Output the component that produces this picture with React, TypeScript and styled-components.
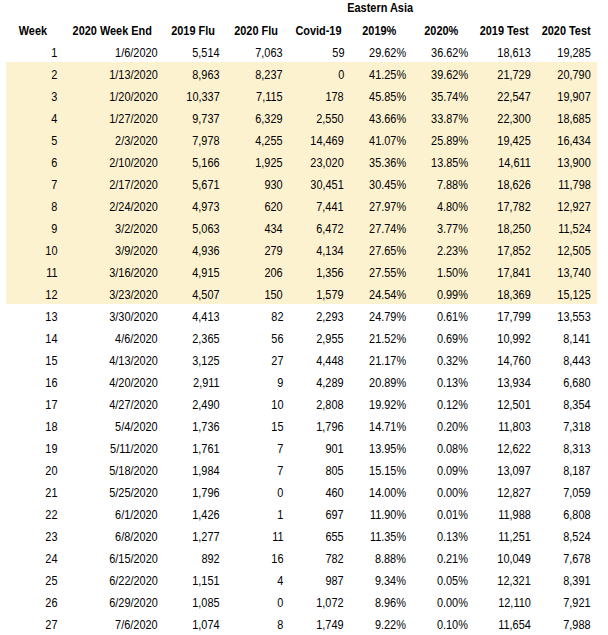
import React from "react";
import styled, { createGlobalStyle } from "styled-components";

const Global = createGlobalStyle`
  html, body { margin: 0; padding: 0; background: #ffffff; }
  body { font-family: "Liberation Sans", Arial, sans-serif; color: #000; }
`;

const Page = styled.div`
  padding: 0 0 0 6px;
`;

const Table = styled.table`
  border-collapse: collapse;
  table-layout: fixed;
  width: 591px;
  font-size: 13px;
`;

const Col = styled.col<{ $w: number }>`
  width: ${(p) => p.$w}px;
`;

const TitleCell = styled.th`
  height: 18px;
  padding: 0 3px 3px 0;
  font-weight: bold;
  text-align: center;
  vertical-align: bottom;
  line-height: 14px;
  box-sizing: border-box;
  white-space: nowrap;
`;

const HeadCell = styled.th`
  height: 22px;
  padding: 0 3px 2px 0;
  font-weight: bold;
  text-align: center;
  vertical-align: bottom;
  line-height: 14px;
  box-sizing: border-box;
  white-space: nowrap;
`;

const Row = styled.tr<{ $hl: boolean }>`
  background: ${(p) => (p.$hl ? "#fdf2cf" : "transparent")};
`;

const Cell = styled.td`
  height: 22px;
  padding: 0 6px 2px 0;
  text-align: right;
  vertical-align: bottom;
  line-height: 14px;
  box-sizing: border-box;
  white-space: nowrap;
`;

/* the sheet's font is rendered horizontally condensed */
const Narrow = styled.span<{ $origin: "right" | "center" }>`
  display: inline-block;
  transform: scaleX(0.84);
  transform-origin: ${(p) => p.$origin} bottom;
`;

const widths = [57, 101, 62, 63, 61, 62, 62, 63, 60];
const headers = [
  "Week",
  "2020 Week End",
  "2019 Flu",
  "2020 Flu",
  "Covid-19",
  "2019%",
  "2020%",
  "2019 Test",
  "2020 Test",
];

const data: string[][] = [
  ["1", "1/6/2020", "5,514", "7,063", "59", "29.62%", "36.62%", "18,613", "19,285"],
  ["2", "1/13/2020", "8,963", "8,237", "0", "41.25%", "39.62%", "21,729", "20,790"],
  ["3", "1/20/2020", "10,337", "7,115", "178", "45.85%", "35.74%", "22,547", "19,907"],
  ["4", "1/27/2020", "9,737", "6,329", "2,550", "43.66%", "33.87%", "22,300", "18,685"],
  ["5", "2/3/2020", "7,978", "4,255", "14,469", "41.07%", "25.89%", "19,425", "16,434"],
  ["6", "2/10/2020", "5,166", "1,925", "23,020", "35.36%", "13.85%", "14,611", "13,900"],
  ["7", "2/17/2020", "5,671", "930", "30,451", "30.45%", "7.88%", "18,626", "11,798"],
  ["8", "2/24/2020", "4,973", "620", "7,441", "27.97%", "4.80%", "17,782", "12,927"],
  ["9", "3/2/2020", "5,063", "434", "6,472", "27.74%", "3.77%", "18,250", "11,524"],
  ["10", "3/9/2020", "4,936", "279", "4,134", "27.65%", "2.23%", "17,852", "12,505"],
  ["11", "3/16/2020", "4,915", "206", "1,356", "27.55%", "1.50%", "17,841", "13,740"],
  ["12", "3/23/2020", "4,507", "150", "1,579", "24.54%", "0.99%", "18,369", "15,125"],
  ["13", "3/30/2020", "4,413", "82", "2,293", "24.79%", "0.61%", "17,799", "13,553"],
  ["14", "4/6/2020", "2,365", "56", "2,955", "21.52%", "0.69%", "10,992", "8,141"],
  ["15", "4/13/2020", "3,125", "27", "4,448", "21.17%", "0.32%", "14,760", "8,443"],
  ["16", "4/20/2020", "2,911", "9", "4,289", "20.89%", "0.13%", "13,934", "6,680"],
  ["17", "4/27/2020", "2,490", "10", "2,808", "19.92%", "0.12%", "12,501", "8,354"],
  ["18", "5/4/2020", "1,736", "15", "1,796", "14.71%", "0.20%", "11,803", "7,318"],
  ["19", "5/11/2020", "1,761", "7", "901", "13.95%", "0.08%", "12,622", "8,313"],
  ["20", "5/18/2020", "1,984", "7", "805", "15.15%", "0.09%", "13,097", "8,187"],
  ["21", "5/25/2020", "1,796", "0", "460", "14.00%", "0.00%", "12,827", "7,059"],
  ["22", "6/1/2020", "1,426", "1", "697", "11.90%", "0.01%", "11,988", "6,808"],
  ["23", "6/8/2020", "1,277", "11", "655", "11.35%", "0.13%", "11,251", "8,524"],
  ["24", "6/15/2020", "892", "16", "782", "8.88%", "0.21%", "10,049", "7,678"],
  ["25", "6/22/2020", "1,151", "4", "987", "9.34%", "0.05%", "12,321", "8,391"],
  ["26", "6/29/2020", "1,085", "0", "1,072", "8.96%", "0.00%", "12,110", "7,921"],
  ["27", "7/6/2020", "1,074", "8", "1,749", "9.22%", "0.10%", "11,654", "7,988"],
];

export default function App() {
  return (
    <>
      <Global />
      <Page>
        <Table>
          <colgroup>
            {widths.map((w, i) => (
              <Col key={i} $w={w} />
            ))}
          </colgroup>
          <thead>
            <tr>
              <TitleCell colSpan={4} />
              <TitleCell colSpan={3}>
                <Narrow $origin="center">Eastern Asia</Narrow>
              </TitleCell>
              <TitleCell colSpan={2} />
            </tr>
            <tr>
              {headers.map((h) => (
                <HeadCell key={h}>
                  <Narrow $origin="center">{h}</Narrow>
                </HeadCell>
              ))}
            </tr>
          </thead>
          <tbody>
            {data.map((r) => {
              const wk = Number(r[0]);
              return (
                <Row key={r[0]} $hl={wk >= 2 && wk <= 12}>
                  {r.map((c, i) => (
                    <Cell key={i}>
                      <Narrow $origin="right">{c}</Narrow>
                    </Cell>
                  ))}
                </Row>
              );
            })}
          </tbody>
        </Table>
      </Page>
    </>
  );
}
